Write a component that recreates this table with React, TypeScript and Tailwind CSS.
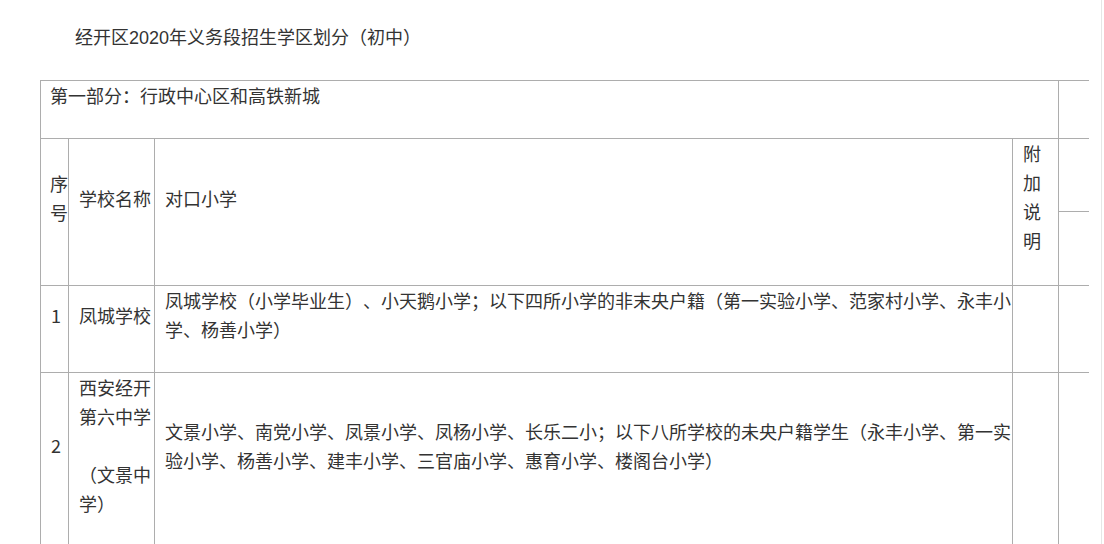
import React from 'react';

const line = 'border-[#adadad]';
const cell = `border-l border-t ${line} align-middle pb-[28px] text-left`;

const Extra: React.FC<{ h: string }> = ({ h }) => (
  <td className={`border-l border-t ${line} p-0 align-top`}>
    <div className={h}></div>
  </td>
);

export default function App() {
  return (
    <div className="w-[1102px] h-[544px] overflow-hidden border-r border-[#e6e6e6] bg-white text-[#333] text-[18px] leading-[29px] font-['Noto_Sans_CJK_SC','Noto_Sans',sans-serif] [text-spacing-trim:space-all]">
      {/* Title */}
      <div className="h-[80px] pt-[24px] pl-[75px] font-['Liberation_Sans','Noto_Sans_CJK_SC',sans-serif]">
        经开区2020年义务段招生学区划分（初中）
      </div>

      <table className="ml-[40px] w-[1049px] table-fixed border-separate border-spacing-0">
        <colgroup>
          <col className="w-[28px]" />
          <col className="w-[86px]" />
          <col className="w-[858px]" />
          <col className="w-[46px]" />
          <col className="w-[31px]" />
        </colgroup>
        <tbody>
          <tr>
            <td colSpan={4} className={`${cell} pl-[9px] pb-[27px] align-top`}>
              第一部分：行政中心区和高铁新城
            </td>
            <Extra h="h-[56px]" />
          </tr>

          <tr>
            <td rowSpan={2} className={`${cell} pl-[9px] pr-0`}>序号</td>
            <td rowSpan={2} className={`${cell} pl-[10px] pr-0`}>学校名称</td>
            <td rowSpan={2} className={`${cell} pl-[10px] pr-0`}>对口小学</td>
            <td rowSpan={2} className={`${cell} pl-[10px] pr-[10px] pb-[30px]`}>附加说明</td>
            <Extra h="h-[72px]" />
          </tr>
          <tr>
            <Extra h="h-[73px]" />
          </tr>

          <tr>
            <td className={`${cell} pl-[10px] pr-0`}>1</td>
            <td className={`${cell} pl-[10px] pr-0`}>凤城学校</td>
            <td className={`${cell} pl-[10px] pr-0`}>
              凤城学校（小学毕业生）、小天鹅小学；以下四所小学的非末央户籍（第一实验小学、范家村小学、永丰小学、杨善小学）
            </td>
            <td className={`${cell} pl-[10px] pr-[10px]`}></td>
            <Extra h="h-[86px]" />
          </tr>

          <tr>
            <td className={`${cell} pl-[10px] pr-0`}>2</td>
            <td className={`${cell} pl-[10px] pr-0`}>
              西安经开第六中学
              <div className="h-[29px]"></div>
              （文景中学）
            </td>
            <td className={`${cell} pl-[10px] pr-0`}>
              文景小学、南党小学、凤景小学、凤杨小学、长乐二小；以下八所学校的未央户籍学生（永丰小学、第一实验小学、杨善小学、建丰小学、三官庙小学、惠育小学、楼阁台小学）
            </td>
            <td className={`${cell} pl-[10px] pr-[10px]`}></td>
            <Extra h="h-[173px]" />
          </tr>
        </tbody>
      </table>
    </div>
  );
}
